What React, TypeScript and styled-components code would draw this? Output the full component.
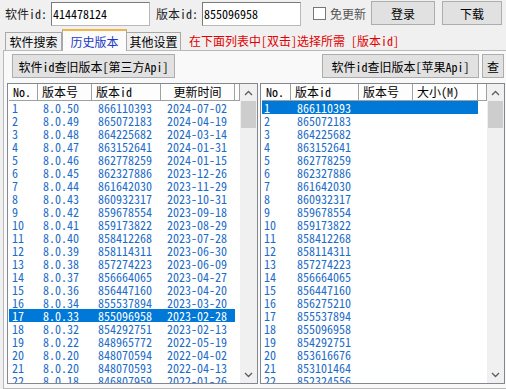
import React from 'react';
import styled, { createGlobalStyle } from 'styled-components';

const GlobalStyle = createGlobalStyle`
  html, body {
    margin: 0;
    padding: 0;
    background: #f0f0f0;
  }
  body {
    width: 506px;
    height: 389px;
    overflow: hidden;
    font-family: "Noto Sans Mono CJK SC", "Noto Sans CJK SC", monospace;
    font-size: 12px;
    color: #000;
  }
`;

const Window = styled.div`
  width: 506px;
  height: 389px;
  display: flex;
  flex-direction: column;
  overflow: hidden;
`;

const TopBar = styled.div`
  display: flex;
  align-items: center;
  height: 26px;
  white-space: nowrap;
  & > * {
    flex-shrink: 0;
  }
`;

const FieldLabel = styled.span<{ $ml: number }>`
  margin-left: ${(p) => p.$ml}px;
  width: 46px;
  color: #222;
`;

const TextInput = styled.div`
  width: 96px;
  height: 22px;
  margin-top: 1px;
  border: 1px solid #7a7a7a;
  border-right-color: #b8b8b8;
  border-bottom-color: #b8b8b8;
  background: #fff;
  display: flex;
  align-items: center;
  padding-left: 1px;
  box-sizing: content-box;
`;

const CheckWrap = styled.label`
  display: flex;
  align-items: center;
  margin-left: 12px;
  color: #555;
`;

const CheckBox = styled.span`
  width: 11px;
  height: 11px;
  border: 1px solid #777;
  background: #fff;
  margin-right: 4px;
`;

const WinButton = styled.div<{ $w: number; $ml: number }>`
  width: ${(p) => p.$w}px;
  height: 22px;
  margin-left: ${(p) => p.$ml}px;
  background: #e1e1e1;
  border: 1px solid #adadad;
  display: flex;
  align-items: center;
  justify-content: center;
  box-sizing: content-box;
  white-space: nowrap;
  flex-shrink: 0;
`;

const TabStrip = styled.div`
  display: flex;
  align-items: flex-end;
  height: 24px;
  padding-left: 5px;
`;

const Tab = styled.div<{ $active?: boolean; $w: number }>`
  width: ${(p) => p.$w}px;
  height: ${(p) => (p.$active ? 22 : 18)}px;
  box-sizing: border-box;
  border: 1px solid #a8a8a8;
  border-bottom: none;
  border-top: ${(p) => (p.$active ? '2px solid #f3b24a' : '1px solid #a8a8a8')};
  background: ${(p) => (p.$active ? '#fbfbfb' : '#f0f0f0')};
  color: ${(p) => (p.$active ? '#1a39c4' : '#000')};
  display: flex;
  align-items: center;
  justify-content: center;
  margin-bottom: ${(p) => (p.$active ? -1 : 0)}px;
  position: relative;
  z-index: ${(p) => (p.$active ? 1 : 0)};
  margin-right: ${(p) => (p.$active ? -1 : 0)}px;
`;

const Hint = styled.span`
  color: #e00000;
  margin-left: 8px;
  align-self: center;
  margin-top: 4px;
`;

const Panel = styled.div`
  margin-left: 3px;
  flex: 1;
  border: 1px solid #b9b9b9;
  border-right: none;
  background: #f9f9f9;
  display: flex;
  flex-direction: column;
  padding: 2px 0 0 3px;
  min-height: 0;
`;

const ActionRow = styled.div`
  display: flex;
  align-items: center;
  height: 26px;
  padding-left: 5px;
  padding-right: 2px;
`;

const Spacer = styled.div`
  flex: 1;
`;

const Lists = styled.div`
  display: flex;
  gap: 2px;
  margin-top: 4px;
`;

const ListView = styled.div<{ $w: number }>`
  width: ${(p) => p.$w}px;
  height: 301px;
  box-sizing: border-box;
  border: 1px solid #828790;
  background: #fff;
  display: flex;
  overflow: hidden;
`;

const ListBody = styled.div`
  flex: 1;
  display: flex;
  flex-direction: column;
  padding-left: 1px;
  overflow: hidden;
`;

const HeaderRow = styled.div`
  display: flex;
  height: 17px;
  flex-shrink: 0;
`;

const HeaderCell = styled.div<{ $w: number; $center?: boolean }>`
  width: ${(p) => p.$w}px;
  flex-shrink: 0;
  box-sizing: border-box;
  border-right: 1px solid #a0a0a0;
  border-bottom: 1px solid #a0a0a0;
  box-shadow: inset 1px 1px 0 #fff;
  background: #fdfdfd;
  padding-left: ${(p) => (p.$center ? 0 : 4)}px;
  text-align: ${(p) => (p.$center ? 'center' : 'left')};
  line-height: 16px;
  white-space: nowrap;
  overflow: hidden;
`;

const HeaderFill = styled(HeaderCell)`
  flex: 1;
`;

const Row = styled.div<{ $selected?: boolean }>`
  display: flex;
  height: 13px;
  line-height: 13px;
  flex-shrink: 0;
  color: ${(p) => (p.$selected ? '#fff' : '#1d6cc8')};
`;

const Cell = styled.div<{ $w: number; $pad: number; $selected?: boolean }>`
  width: ${(p) => p.$w}px;
  flex-shrink: 0;
  box-sizing: border-box;
  padding-left: ${(p) => p.$pad}px;
  white-space: nowrap;
  overflow: hidden;
  background: ${(p) => (p.$selected ? '#0078d7' : 'transparent')};
`;

const ScrollBar = styled.div`
  width: 17px;
  flex-shrink: 0;
  background: #f0f0f0;
  display: flex;
  flex-direction: column;
`;

const Arrow = styled.div`
  height: 17px;
  display: flex;
  align-items: center;
  justify-content: center;
`;

const Thumb = styled.div`
  height: 27px;
  margin: 0 1px;
  background: #cdcdcd;
`;

const Track = styled.div`
  flex: 1;
`;

const Chevron = ({ down }: { down?: boolean }) => (
  <svg width="9" height="6" viewBox="0 0 9 6">
    <path
      d={down ? 'M1 1 L4.5 4.5 L8 1' : 'M1 5 L4.5 1.5 L8 5'}
      fill="none"
      stroke="#606060"
      strokeWidth="1.4"
    />
  </svg>
);

const Scroller = () => (
  <ScrollBar>
    <Arrow>
      <Chevron />
    </Arrow>
    <Thumb />
    <Track />
    <Arrow>
      <Chevron down />
    </Arrow>
  </ScrollBar>
);

const leftRows = [
  ['8.0.50', '866110393', '2024-07-02'],
  ['8.0.49', '865072183', '2024-04-19'],
  ['8.0.48', '864225682', '2024-03-14'],
  ['8.0.47', '863152641', '2024-01-31'],
  ['8.0.46', '862778259', '2024-01-15'],
  ['8.0.45', '862327886', '2023-12-26'],
  ['8.0.44', '861642030', '2023-11-29'],
  ['8.0.43', '860932317', '2023-10-31'],
  ['8.0.42', '859678554', '2023-09-18'],
  ['8.0.41', '859173822', '2023-08-29'],
  ['8.0.40', '858412268', '2023-07-28'],
  ['8.0.39', '858114311', '2023-06-30'],
  ['8.0.38', '857274223', '2023-06-09'],
  ['8.0.37', '856664065', '2023-04-27'],
  ['8.0.36', '856447160', '2023-04-20'],
  ['8.0.34', '855537894', '2023-03-20'],
  ['8.0.33', '855096958', '2023-02-28'],
  ['8.0.32', '854292751', '2023-02-13'],
  ['8.0.22', '848965772', '2022-05-19'],
  ['8.0.20', '848070594', '2022-04-02'],
  ['8.0.20', '848070593', '2022-04-13'],
  ['8.0.18', '846807959', '2022-01-26'],
  ['8.0.16', '846016020', '2021-12-20'],
];

const rightRows = [
  '866110393', '865072183', '864225682', '863152641', '862778259',
  '862327886', '861642030', '860932317', '859678554', '859173822',
  '858412268', '858114311', '857274223', '856664065', '856447160',
  '856275210', '855537894', '855096958', '854292751', '853616676',
  '853101464', '852324556', '851580432',
];

export default function App() {
  return (
    <Window>
      <GlobalStyle />
      <TopBar>
        <FieldLabel $ml={5}>软件id:</FieldLabel>
        <TextInput>414478124</TextInput>
        <FieldLabel $ml={6}>版本id:</FieldLabel>
        <TextInput>855096958</TextInput>
        <CheckWrap>
          <CheckBox />
          免更新
        </CheckWrap>
        <WinButton $w={62} $ml={5}>登录</WinButton>
        <WinButton $w={58} $ml={7}>下载</WinButton>
      </TopBar>

      <TabStrip>
        <Tab $w={57}>软件搜索</Tab>
        <Tab $w={65} $active>历史版本</Tab>
        <Tab $w={55}>其他设置</Tab>
        <Hint>在下面列表中[双击]选择所需 [版本id]</Hint>
      </TabStrip>

      <Panel>
        <ActionRow>
          <WinButton $w={161} $ml={0}>软件id查旧版本[第三方Api]</WinButton>
          <Spacer />
          <WinButton $w={155} $ml={0}>软件id查旧版本[苹果Api]</WinButton>
          <WinButton $w={20} $ml={3}>查</WinButton>
        </ActionRow>

        <Lists>
          <ListView $w={251}>
            <ListBody>
              <HeaderRow>
                <HeaderCell $w={29}>No.</HeaderCell>
                <HeaderCell $w={54}>版本号</HeaderCell>
                <HeaderCell $w={69}>版本id</HeaderCell>
                <HeaderCell $w={74} $center>更新时间</HeaderCell>
                <HeaderFill $w={0} />
              </HeaderRow>
              {leftRows.map(([ver, id, date], i) => {
                const sel = i === 16;
                return (
                  <Row key={id} $selected={sel}>
                    <Cell $w={29} $pad={3} $selected={sel}>{i + 1}</Cell>
                    <Cell $w={54} $pad={5} $selected={sel}>{ver}</Cell>
                    <Cell $w={69} $pad={6} $selected={sel}>{id}</Cell>
                    <Cell $w={74} $pad={6} $selected={sel}>{date}</Cell>
                  </Row>
                );
              })}
            </ListBody>
            <Scroller />
          </ListView>

          <ListView $w={245}>
            <ListBody>
              <HeaderRow>
                <HeaderCell $w={29}>No.</HeaderCell>
                <HeaderCell $w={68}>版本id</HeaderCell>
                <HeaderCell $w={54}>版本号</HeaderCell>
                <HeaderCell $w={65}>大小(M)</HeaderCell>
                <HeaderFill $w={0} />
              </HeaderRow>
              {rightRows.map((id, i) => {
                const sel = i === 0;
                return (
                  <Row key={id} $selected={sel}>
                    <Cell $w={29} $pad={2} $selected={sel}>{i + 1}</Cell>
                    <Cell $w={68} $pad={6} $selected={sel}>{id}</Cell>
                    <Cell $w={54} $pad={5} $selected={sel} />
                    <Cell $w={65} $pad={5} $selected={sel} />
                  </Row>
                );
              })}
            </ListBody>
            <Scroller />
          </ListView>
        </Lists>
      </Panel>
    </Window>
  );
}
